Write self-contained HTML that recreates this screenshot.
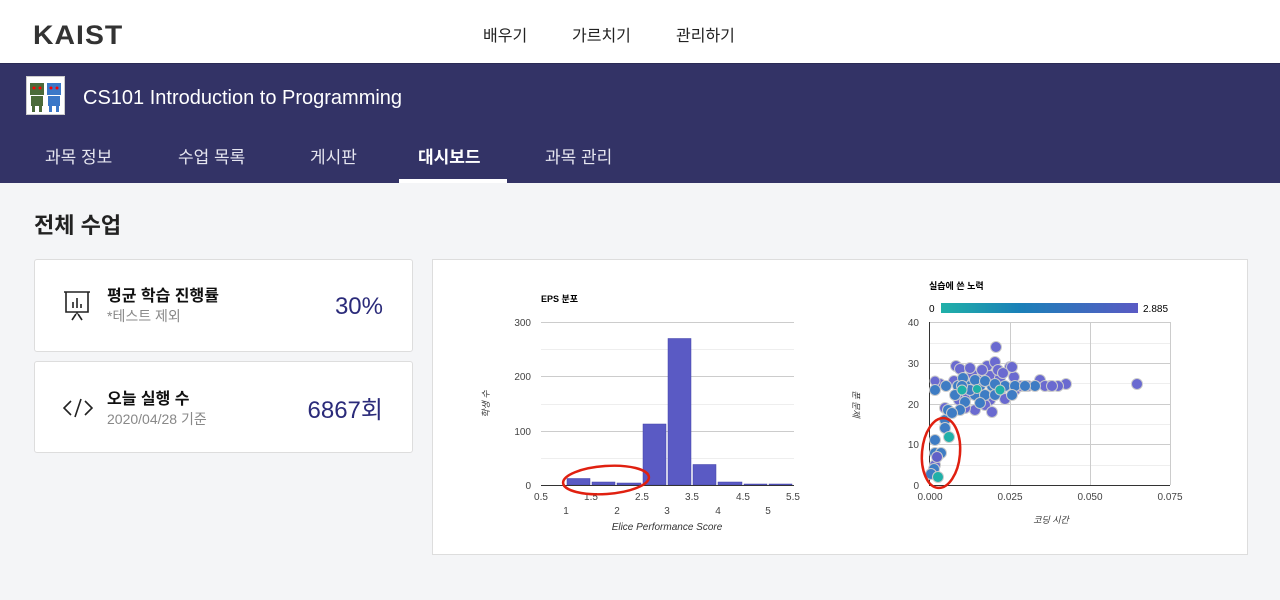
<!DOCTYPE html>
<html><head><meta charset="utf-8"><style>
*{margin:0;padding:0;box-sizing:border-box}
body{width:1280px;height:600px;overflow:hidden;background:#f4f5f7;font-family:"Liberation Sans","Noto Sans CJK KR",sans-serif;position:relative}
.top{position:absolute;left:0;top:0;width:1280px;height:64px;background:#fff;border-bottom:1px solid #2a2a55}
.logo{position:absolute;left:33px;top:20px;font-size:27px;line-height:30px;font-weight:bold;color:#333;letter-spacing:1px;transform:scaleX(1.05);transform-origin:left}
.menu{position:absolute;top:26px;font-size:16px;line-height:22px;color:#222}
.band{position:absolute;left:0;top:64px;width:1280px;height:119px;background:#333366}
.thumb{position:absolute;left:26px;top:76px;width:39px;height:39px;background:#fff;border:1px solid #ccc}
.title{position:absolute;left:83px;top:86px;font-size:20px;line-height:24px;color:#fff}
.tab{position:absolute;top:147px;font-size:17px;line-height:22px;color:#e6e6f0}
.ul{position:absolute;left:399px;top:179px;width:108px;height:4px;background:#fff}
h1{position:absolute;left:34px;top:212px;font-size:22px;line-height:28px;font-weight:bold;color:#222}
.card{position:absolute;left:34px;width:379px;background:#fff;border:1px solid #ddd;border-radius:3px}
.ct{position:absolute;left:72px;font-size:16px;line-height:20px;font-weight:bold;color:#111}
.cs{position:absolute;left:72px;font-size:14px;line-height:18px;color:#888}
.cv{position:absolute;right:29px;font-size:24px;line-height:28px;color:#2b2b7a}
.chart{position:absolute;left:432px;top:259px;width:816px;height:296px;background:#fff;border:1px solid #ddd}
</style></head><body>
<div class="top">
<div class="logo">KAIST</div>
<div class="menu" style="left:483px">배우기</div>
<div class="menu" style="left:572px">가르치기</div>
<div class="menu" style="left:676px">관리하기</div>
</div>
<div class="band"></div>
<div class="thumb"><svg width="37" height="37"><rect x="3" y="6" width="14" height="12" fill="#4b6b3a"/><rect x="20" y="6" width="14" height="12" fill="#3b78c8"/><rect x="4" y="19" width="12" height="10" fill="#4b6b3a"/><rect x="21" y="19" width="12" height="10" fill="#3b78c8"/><rect x="5" y="29" width="3" height="6" fill="#4b6b3a"/><rect x="12" y="29" width="3" height="6" fill="#4b6b3a"/><rect x="22" y="29" width="3" height="6" fill="#3b78c8"/><rect x="29" y="29" width="3" height="6" fill="#3b78c8"/><circle cx="7" cy="11" r="1.5" fill="red"/><circle cx="13" cy="11" r="1.5" fill="red"/><circle cx="24" cy="11" r="1.5" fill="red"/><circle cx="30" cy="11" r="1.5" fill="red"/></svg></div>
<div class="title">CS101 Introduction to Programming</div>
<div class="tab" style="left:45px">과목 정보</div>
<div class="tab" style="left:178px">수업 목록</div>
<div class="tab" style="left:310px">게시판</div>
<div class="tab" style="left:418px;color:#fff;font-weight:bold">대시보드</div>
<div class="tab" style="left:545px">과목 관리</div>
<div class="ul"></div>
<h1>전체 수업</h1>
<div class="card" style="top:259px;height:93px">
<svg style="position:absolute;left:28px;top:30px" width="28" height="32" fill="none" stroke="#222" stroke-width="1.6"><path d="M1 2H27M3 2V22H25V2M14 22V24M9 30L13 24M19 30L15 24"/><path d="M10 18V12M14 18V8M18 18V14"/></svg>
<div class="ct" style="top:27px">평균 학습 진행률</div>
<div class="cs" style="top:47px">*테스트 제외</div>
<div class="cv" style="top:33px">30%</div>
</div>
<div class="card" style="top:361px;height:92px">
<svg style="position:absolute;left:28px;top:36px" width="30" height="20" fill="none" stroke="#222" stroke-width="1.6"><path d="M8 3L1 10L8 17M22 3L29 10L22 17M18 1L12 19"/></svg>
<div class="ct" style="top:28px">오늘 실행 수</div>
<div class="cs" style="top:48px">2020/04/28 기준</div>
<div class="cv" style="top:35px">6867회</div>
</div>
<div class="chart">
<svg width="816" height="296" style="position:absolute;left:-1px;top:-1px" font-family="Liberation Sans,Noto Sans CJK KR,sans-serif">
<g transform="translate(-432,-259)">
<text x="541" y="302" font-size="9" font-weight="bold">EPS 분포</text>
<g stroke="#ccc"><line x1="541" x2="794" y1="322.5" y2="322.5"/><line x1="541" x2="794" y1="349.5" y2="349.5" stroke="#eee"/><line x1="541" x2="794" y1="376.5" y2="376.5"/><line x1="541" x2="794" y1="404.5" y2="404.5" stroke="#eee"/><line x1="541" x2="794" y1="431.5" y2="431.5"/><line x1="541" x2="794" y1="458.5" y2="458.5" stroke="#eee"/></g>
<g font-size="10" fill="#444" text-anchor="end"><text x="531" y="326">300</text><text x="531" y="380">200</text><text x="531" y="435">100</text><text x="531" y="489">0</text></g>
<g fill="#5a5ac4" stroke="#4040a8" stroke-width=".5"><rect x="567" y="478.5" width="23" height="6.5"/><rect x="592" y="482" width="23" height="3"/><rect x="617" y="483" width="24" height="2"/><rect x="643" y="424" width="23" height="61"/><rect x="668" y="338.5" width="23" height="146.5"/><rect x="693" y="464.5" width="23" height="20.5"/><rect x="718" y="482" width="24" height="3"/><rect x="744" y="484" width="23" height="1"/><rect x="769" y="484" width="23" height="1"/></g>
<line x1="541" x2="794" y1="485.5" y2="485.5" stroke="#333"/>
<g font-size="10" fill="#444" text-anchor="middle"><text x="541" y="500">0.5</text><text x="591" y="500">1.5</text><text x="642" y="500">2.5</text><text x="692" y="500">3.5</text><text x="743" y="500">4.5</text><text x="793" y="500">5.5</text><text x="566" y="514">1</text><text x="617" y="514">2</text><text x="667" y="514">3</text><text x="718" y="514">4</text><text x="768" y="514">5</text></g>
<text x="667" y="530" font-size="10" font-style="italic" text-anchor="middle" fill="#333">Elice Performance Score</text>
<text transform="translate(489,404) rotate(-90)" font-size="9" font-style="italic" text-anchor="middle" fill="#333">학생 수</text>
<ellipse cx="606" cy="480" rx="43" ry="14" fill="none" stroke="#e02010" stroke-width="2.5" transform="rotate(-4 606 480)"/>

<text x="929" y="289" font-size="9" font-weight="bold">실습에 쓴 노력</text>
<text x="929" y="312" font-size="10">0</text>
<defs><linearGradient id="g"><stop offset="0" stop-color="#20b0a8"/><stop offset=".4" stop-color="#1a80b8"/><stop offset="1" stop-color="#5a5ac4"/></linearGradient></defs>
<rect x="941" y="303" width="197" height="10" fill="url(#g)"/>
<text x="1143" y="312" font-size="10">2.885</text>
<g stroke="#ccc"><line x1="930" x2="1170" y1="322.5" y2="322.5"/><line x1="930" x2="1170" y1="363.5" y2="363.5"/><line x1="930" x2="1170" y1="404.5" y2="404.5"/><line x1="930" x2="1170" y1="444.5" y2="444.5"/><line x1="930" x2="1170" y1="343.5" y2="343.5" stroke="#eee"/><line x1="930" x2="1170" y1="383.5" y2="383.5" stroke="#eee"/><line x1="930" x2="1170" y1="424.5" y2="424.5" stroke="#eee"/><line x1="930" x2="1170" y1="465.5" y2="465.5" stroke="#eee"/><line x1="1010.5" x2="1010.5" y1="322" y2="485"/><line x1="1090.5" x2="1090.5" y1="322" y2="485"/><line x1="1170.5" x2="1170.5" y1="322" y2="485"/></g>
<line x1="929.5" x2="929.5" y1="322" y2="486" stroke="#333"/><line x1="929" x2="1170" y1="485.5" y2="485.5" stroke="#333"/>
<g font-size="10" fill="#444" text-anchor="end"><text x="919" y="326">40</text><text x="919" y="367">30</text><text x="919" y="408">20</text><text x="919" y="448">10</text><text x="919" y="489">0</text></g>
<g font-size="10" fill="#444" text-anchor="middle"><text x="930" y="500">0.000</text><text x="1010" y="500">0.025</text><text x="1090" y="500">0.050</text><text x="1170" y="500">0.075</text></g>
<text x="1051" y="523" font-size="9" font-style="italic" text-anchor="middle" fill="#333">코딩 시간</text>
<text transform="translate(853,404) rotate(90)" font-size="9" font-style="italic" text-anchor="middle" fill="#333">푼 문제</text>
<g stroke="#ccc" stroke-width="1">
<g fill="#6a6ad0"><circle cx="996" cy="347" r="5.5"/><circle cx="1010" cy="367" r="5.5"/><circle cx="956" cy="366" r="5.5"/><circle cx="960" cy="369" r="5.5"/><circle cx="987" cy="366" r="5.5"/><circle cx="995" cy="362" r="5.5"/><circle cx="1040" cy="380" r="5.5"/><circle cx="1066" cy="384" r="5.5"/><circle cx="1137" cy="384" r="5.5"/><circle cx="1000" cy="393" r="5.5"/><circle cx="1014" cy="377" r="5.5"/><circle cx="1015" cy="390" r="5.5"/><circle cx="1012" cy="367" r="5.5"/><circle cx="972" cy="374" r="5.5"/><circle cx="978" cy="380" r="5.5"/><circle cx="964" cy="381" r="5.5"/><circle cx="990" cy="400" r="5.5"/><circle cx="985" cy="405" r="5.5"/><circle cx="975" cy="410" r="5.5"/><circle cx="965" cy="408" r="5.5"/><circle cx="945" cy="408" r="5.5"/><circle cx="990" cy="376" r="5.5"/><circle cx="1002" cy="386" r="5.5"/><circle cx="1050" cy="386" r="5.5"/><circle cx="1045" cy="386" r="5.5"/><circle cx="1021" cy="386" r="5.5"/><circle cx="1028" cy="386" r="5.5"/><circle cx="1000" cy="378" r="5.5"/><circle cx="1005" cy="399" r="5.5"/><circle cx="967" cy="396" r="5.5"/><circle cx="935" cy="465" r="5.5"/><circle cx="998" cy="370" r="5.5"/><circle cx="954" cy="381" r="5.5"/><circle cx="940" cy="384" r="5.5"/><circle cx="959" cy="400" r="5.5"/><circle cx="935" cy="381" r="5"/><circle cx="1058" cy="386" r="5.5"/><circle cx="1052" cy="386" r="5.5"/><circle cx="982" cy="370" r="5.5"/><circle cx="970" cy="368" r="5.5"/><circle cx="1003" cy="373" r="5.5"/><circle cx="992" cy="412" r="5.5"/></g>
<g fill="#3e7cc4"><circle cx="935" cy="390" r="5.5"/><circle cx="946" cy="386" r="5.5"/><circle cx="958" cy="386" r="5.5"/><circle cx="970" cy="386" r="5.5"/><circle cx="980" cy="386" r="5.5"/><circle cx="992" cy="386" r="5.5"/><circle cx="1005" cy="386" r="5.5"/><circle cx="1015" cy="386" r="5.5"/><circle cx="1035" cy="386" r="5.5"/><circle cx="955" cy="395" r="5.5"/><circle cx="975" cy="395" r="5.5"/><circle cx="985" cy="395" r="5.5"/><circle cx="995" cy="395" r="5.5"/><circle cx="965" cy="402" r="5.5"/><circle cx="980" cy="403" r="5.5"/><circle cx="945" cy="420" r="5.5"/><circle cx="948" cy="410" r="5.5"/><circle cx="963" cy="378" r="5.5"/><circle cx="975" cy="380" r="5.5"/><circle cx="985" cy="381" r="5.5"/><circle cx="995" cy="384" r="5.5"/><circle cx="1012" cy="395" r="5.5"/><circle cx="960" cy="410" r="5.5"/><circle cx="970" cy="390" r="5.5"/><circle cx="945" cy="428" r="5.5"/><circle cx="935" cy="440" r="5.5"/><circle cx="935" cy="453" r="5.5"/><circle cx="941" cy="453" r="5.5"/><circle cx="934" cy="469" r="5.5"/><circle cx="931" cy="474" r="5.5"/><circle cx="952" cy="413" r="5.5"/><circle cx="1025" cy="386" r="5.5"/><circle cx="962" cy="386" r="5.5"/></g>
<g fill="#20b0a8"><circle cx="938" cy="477" r="5.5"/><circle cx="949" cy="437" r="5.5"/><circle cx="1000" cy="390" r="5"/><circle cx="962" cy="390" r="5"/><circle cx="977" cy="389" r="4.5"/></g>
<circle cx="937" cy="457" r="5.5" fill="#6060c8"/>
</g>
<ellipse cx="941" cy="453" rx="19" ry="35" fill="none" stroke="#e02010" stroke-width="2.5" transform="rotate(5 941 453)"/>
</g></svg>
</div>
</body></html>
